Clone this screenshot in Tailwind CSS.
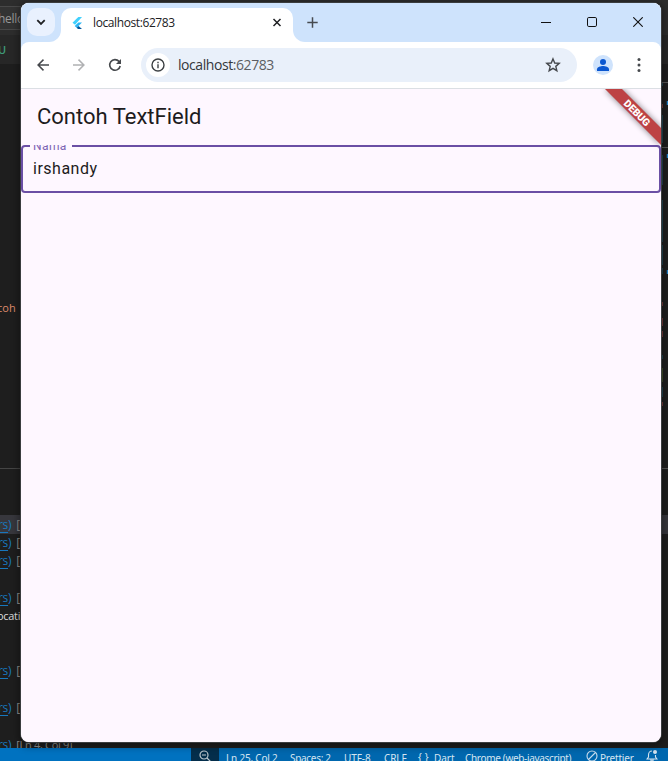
<!DOCTYPE html>
<html lang="en">
<head>
<meta charset="utf-8">
<title>Contoh TextField</title>
<script src="https://cdn.jsdelivr.net/npm/@tailwindcss/browser@4"></script>
</head>
<body class="relative h-[761px] w-[668px] overflow-hidden bg-[#1e1e1e] font-['Open_Sans',sans-serif] text-[11px]">
<!-- editor behind the browser -->
<div class="flex h-[761px] flex-col whitespace-nowrap">
  <div class="flex h-[35px] shrink-0 items-center bg-[#2d2d2d]">
    <div class="flex h-[24px] w-[30px] items-center border-y border-[#484848] bg-[#333] text-[12px] tracking-[-0.3px] text-[#999]"><span class="-ml-[2px] mt-[2px]">hello</span></div>
  </div>
  <div class="flex h-[29px] shrink-0 items-center bg-[#272727] text-[11px] font-semibold text-[#3f9c79]"><span class="-ml-[2px] mt-[2px]">U</span></div>
  <div class="flex h-[405px] shrink-0 flex-col border-b border-[#454545] pt-[233px]">
    <div class="flex h-[20px] items-center text-[11px] leading-none text-[#dd8a6c]"><span class="-ml-[3px]">coh</span></div>
  </div>
  <div class="h-[46px] shrink-0"></div>
  <div class="grid h-[246px] shrink-0 auto-rows-[18.35px] items-center text-[12px] leading-[15px] tracking-[-0.3px] text-[#929292]">
    <div class="flex h-[19px] items-center gap-[5px] bg-[#37373d]"><span class="-ml-[2px] text-[#1877bd]"><span class="underline underline-offset-3">rs</span>)</span><span>[Ln</span></div>
    <div class="flex gap-[5px]"><span class="-ml-[2px] text-[#1877bd]"><span class="underline underline-offset-3">rs</span>)</span><span>[Ln</span></div>
    <div class="flex gap-[5px]"><span class="-ml-[2px] text-[#1877bd]"><span class="underline underline-offset-3">rs</span>)</span><span>[Ln</span></div>
    <div></div>
    <div class="flex gap-[5px]"><span class="-ml-[2px] text-[#1877bd]"><span class="underline underline-offset-3">rs</span>)</span><span>[Ln</span></div>
    <div class="text-[11px] text-[#ddd]"><span class="-ml-[3px]">ocation</span></div>
    <div></div>
    <div></div>
    <div class="flex gap-[5px]"><span class="-ml-[2px] text-[#1877bd]"><span class="underline underline-offset-3">rs</span>)</span><span>[Ln</span></div>
    <div></div>
    <div class="flex gap-[5px]"><span class="-ml-[2px] text-[#1877bd]"><span class="underline underline-offset-3">rs</span>)</span><span>[Ln</span></div>
    <div></div>
    <div class="flex gap-[5px]"><span class="-ml-[2px] text-[#1877bd]"><span class="underline underline-offset-3">rs</span>)</span><span class="text-[11px]">[Ln 4, Col 9]</span></div>
  </div>
</div>

<!-- minimap and scrollbar marks -->
<div class="absolute left-[661px] top-0 h-[761px] w-[7px]">
  <svg width="7" height="761" viewBox="0 0 7 761">
    <path d="M0 82.5h7M0 147.5h7M0 468.5h7" stroke="#555"/>
    <path d="M1.500 83v3M1.500 115v28M1.500 155v30M1.500 200v42M1.500 245v20M1.500 268v6M1.500 355v4M1.500 387v10" stroke="#20434f"/>
    <path d="M1.500 104v4M1.500 302v4M1.500 318v8M1.500 331v6M1.500 402v4" stroke="#713838"/>
    <path d="M1.500 368v14" stroke="#3c4a28"/>
    <path d="M6.500 101v4M6.500 154v4M6.500 270v4" stroke="#1d82ca" stroke-width="1.500"/>
  </svg>
</div>

<!-- editor status bar -->
<div class="absolute bottom-0 left-0 flex h-[13px] w-full overflow-hidden whitespace-nowrap bg-[#0067ae] font-['Noto_Sans',sans-serif] text-[10px] leading-[20px] tracking-[-0.05px] text-[#d6e5f1]">
  <div class="w-[191px] shrink-0 bg-[#0072c0]"></div>
  <div class="w-[28px] shrink-0 bg-[#042e4b] pl-[7px] pt-[2px]">
    <svg width="14" height="14" viewBox="0 0 14 14" fill="none" stroke="#bdc7ce" stroke-width="1.2"><circle cx="6" cy="5" r="4"/><path d="M4 5h4M9 8l4 4"/></svg>
  </div>
  <span class="ml-[7px] w-[64px] shrink-0 tracking-[-0.2px]">Ln 25, Col 2</span>
  <span class="w-[54px] shrink-0 tracking-[-0.3px]">Spaces: 2</span>
  <span class="w-[40px] shrink-0 tracking-[-0.1px]">UTF-8</span>
  <span class="w-[34px] shrink-0 tracking-[-0.1px]">CRLF</span>
  <span class="-mt-px w-[16px] shrink-0 tracking-[3px]">{}</span>
  <span class="w-[31px] shrink-0">Dart</span>
  <span class="w-[121px] shrink-0 tracking-[-0.33px]">Chrome (web-javascript)</span>
  <svg class="mt-[2px] shrink-0" width="14" height="12" viewBox="0 0 14 12" fill="none" stroke="#c8dced" stroke-width="1.1"><circle cx="6" cy="6" r="5"/><path d="M2.5 9.5l7-7"/></svg>
  <span class="w-[46px] shrink-0 tracking-[-0.2px]">Prettier</span>
  <svg class="mt-px shrink-0" width="12" height="12" viewBox="0 0 12 12" fill="none" stroke="#d4e3ef" stroke-width="1.1"><path d="M6 2C3.5 2 2.5 4 2.5 6v2L1 10h10L9.500 8V6M5 10v2h2v-2"/><circle cx="9" cy="3" r="2" fill="#d4e3ef" stroke="none"/></svg>
</div>

<!-- browser window -->
<main class="absolute left-[21px] top-[3px] flex h-[739px] w-[640px] flex-col overflow-hidden rounded-lg bg-[#fef7ff] shadow-[0_0_0_1px_#3a3d3f,0_2px_7px_3px_rgba(0,0,0,0.35)]">
  <header class="flex h-[39px] shrink-0 bg-[#cee3fc]">
    <div class="h-[39px] w-[40px] shrink-0 bg-white">
      <div class="h-full rounded-br-[12px] bg-[#cee3fc] pl-[6px] pt-[5px]">
        <button class="flex size-[28px] items-center justify-center rounded-[10px] bg-[#e9f1fe]">
          <svg width="10" height="7" viewBox="0 0 10 7" fill="none" stroke="#202124" stroke-width="1.8"><path d="M1.300 1.200L5 4.900 8.700 1.200"/></svg>
        </button>
      </div>
    </div>
    <div class="w-[232px] shrink-0 bg-[#cee3fc] pt-[5px]">
      <div class="flex h-[34px] items-center rounded-t-[10px] bg-white pb-[5px] pl-[10px] pr-[11px]">
        <svg class="mr-[9px]" width="13" height="14" viewBox="0 0 13 14"><path d="M7.300 1h3.700L4 8.700 1.500 6.800z" fill="#40d0fd"/><path d="M7.300 6.500H11L7.500 10 5.600 11.800 3.700 10z" fill="#29b6f6"/><path d="M5.600 11.800L7.500 10 11 13H7z" fill="#01579b"/></svg>
        <span class="text-[12px] tracking-[-0.4px] text-[#202124]">localhost:62783</span>
        <svg class="ml-auto" width="10" height="10" viewBox="0 0 10 10" stroke="#202124" stroke-width="1.500"><path d="M1.500 1l7 7M8.500 1l-7 7"/></svg>
      </div>
    </div>
    <div class="flex-1 bg-white">
      <div class="flex h-full items-center rounded-bl-[12px] bg-[#cee3fc] pb-px pl-[15px]">
        <svg class="-ml-px" width="11" height="11" viewBox="0 0 11 11" stroke="#474b50" stroke-width="1.5"><path d="M.3 5.500h10.400M5.500.3v10.400"/></svg>
        <svg class="ml-auto" width="10" height="11" viewBox="0 0 10 11" stroke="#111" stroke-width="1"><path d="M0 5.500h10"/></svg>
        <svg class="ml-[36px]" width="10" height="10" viewBox="0 0 10 10" fill="none" stroke="#111"><rect x=".5" y=".5" width="9" height="9" rx="1.300"/></svg>
        <svg class="ml-[36px] mr-[18px]" width="10" height="10" viewBox="0 0 10 10" stroke="#111" stroke-width="1.100"><path d="M.3.300l9.400 9.400M9.700.300L.3 9.700"/></svg>
      </div>
    </div>
  </header>
  <div class="h-[47px] shrink-0 bg-[#cee3fc]">
    <nav class="flex h-full items-center rounded-t-[8px] border-b border-[#dbdfe4] bg-white pl-[16px]">
      <svg width="12" height="12" viewBox="0 0 12 12" fill="none" stroke="#46494d" stroke-width="1.500"><path d="M12 6H1M6.500.6L1.100 6l5.400 5.400"/></svg>
      <svg class="ml-[24px]" width="12" height="12" viewBox="0 0 12 12" fill="none" stroke="#b0b1b3" stroke-width="1.500"><path d="M0 6h11M5.500.6L10.900 6l-5.400 5.400"/></svg>
      <svg class="ml-[23px]" width="14" height="14" viewBox="0 0 14 14" fill="none"><path d="M12.200 8A5.300 5.300 0 1 1 11 3.400l1 1.200" stroke="#46494d" stroke-width="1.600"/><path d="M13 1v5H8z" fill="#46494d"/></svg>
      <div class="ml-[19px] flex h-[34px] w-[436px] items-center rounded-full bg-[#e9f0fa] pl-[5px] pr-[16px]">
        <span class="mr-[8px] flex size-[24px] items-center justify-center rounded-full bg-white"><svg width="14" height="14" viewBox="0 0 14 14" fill="none" stroke="#3c4043" stroke-width="1.400"><circle cx="7" cy="7" r="6"/><path d="M7 6.200V10.200M7 3.700v1.500"/></svg></span>
        <span class="-mt-px text-[14px] tracking-[-0.43px] text-[#34373b]">localhost<span class="text-[#5b5e63]">:62783</span></span>
        <svg class="ml-auto" width="16" height="16" viewBox="0 0 16 16" fill="none" stroke="#46494d" stroke-width="1.400"><path d="M8 1.900l1.750 4.100 4.450.4-3.400 2.950 1.050 4.350L8 11.400l-3.850 2.300L5.200 9.350 1.800 6.400l4.450-.4z"/></svg>
      </div>
      <svg class="ml-[16px]" width="20" height="20" viewBox="0 0 20 20"><circle cx="10" cy="10" r="10" fill="#cfe3fc"/><circle cx="10" cy="7" r="3" fill="#0b57d0"/><path d="M4 16v-1.700c0-2 3.700-3.200 6-3.200s6 1.200 6 3.200V16z" fill="#0b57d0"/></svg>
      <svg class="ml-[24px]" width="4" height="14" viewBox="0 0 4 14" fill="#46494d"><circle cx="2" cy="1.500" r="1.500"/><circle cx="2" cy="7" r="1.500"/><circle cx="2" cy="12.500" r="1.500"/></svg>
    </nav>
  </div>
  <section class="relative flex flex-1 flex-col overflow-hidden bg-[#fef7ff] font-[Roboto,sans-serif] text-[#1d1b20]">
    <h1 class="flex h-[56px] shrink-0 items-center pl-[16px] text-[22px] leading-[28px]">Contoh TextField</h1>
    <div class="relative flex h-[48px] shrink-0 items-center rounded-[4px] border-2 border-[#6b4fa5] pl-[10px] text-[16px] tracking-[0.5px]">
      irshandy
      <div class="absolute -top-[2px] left-[7px] h-[9px] w-[42px] overflow-hidden bg-[#fef7ff] pl-[3px]"><span class="relative -top-[7px] block text-[12px] leading-[16px] tracking-[0.4px] text-[#7d64b4]">Nama</span></div>
    </div>
    <!-- debug ribbon -->
    <svg class="absolute right-0 top-0" width="80" height="80" viewBox="0 0 80 80">
      <defs><filter id="soft" x="-30%" y="-30%" width="160%" height="160%"><feGaussianBlur stdDeviation="3"/></filter></defs>
      <path d="M24 0h17l39 39v17z" fill="#000" opacity=".5" filter="url(#soft)"/>
      <path d="M24 0h17l39 39v17z" fill="#bd4244"/>
      <text transform="translate(53.500 26.500) rotate(45)" text-anchor="middle" font-family="Roboto" font-weight="900" font-size="10.200" fill="#fff">DEBUG</text>
    </svg>
  </section>
</main>
</body>
</html>
